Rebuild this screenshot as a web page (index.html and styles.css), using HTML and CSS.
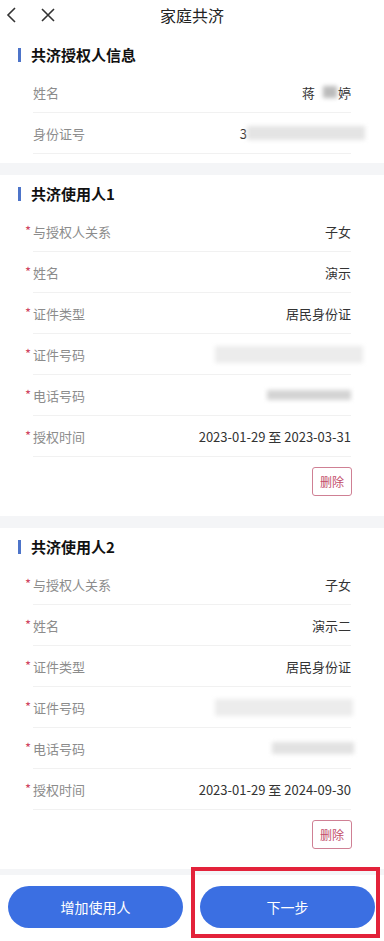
FILE: index.html
```html
<!DOCTYPE html>
<html lang="zh">
<head>
<meta charset="utf-8">
<title>家庭共济</title>
<link rel="stylesheet" href="styles.css">
</head>
<body>
<div class="page">
  <header class="nav">
    <div class="nav-icons">
      <svg class="ic" width="14" height="18" viewBox="0 0 14 18"><path d="M10 2 L3 9 L10 16" fill="none" stroke="#333" stroke-width="1.6"/></svg>
      <svg class="ic" width="18" height="18" viewBox="0 0 18 18"><path d="M3 3 L15 15 M15 3 L3 15" fill="none" stroke="#333" stroke-width="1.6"/></svg>
    </div>
    <div class="nav-title">家庭共济</div>
  </header>

  <section class="card card-info">
    <div class="card-title"><span class="bar"></span>共济授权人信息</div>
    <div class="row"><span class="label plain">姓名</span><span class="value">蒋<span class="blur blur-name"></span>婷</span></div>
    <div class="row"><span class="label plain">身份证号</span><span class="value">3<span class="blur blur-id"></span></span></div>
  </section>

  <div class="gap"></div>

  <section class="card">
    <div class="card-title"><span class="bar"></span>共济使用人1</div>
    <div class="row"><span class="label"><i class="req">*</i>与授权人关系</span><span class="value">子女</span></div>
    <div class="row"><span class="label"><i class="req">*</i>姓名</span><span class="value">演示</span></div>
    <div class="row"><span class="label"><i class="req">*</i>证件类型</span><span class="value">居民身份证</span></div>
    <div class="row"><span class="label"><i class="req">*</i>证件号码</span><span class="value"><span class="blur blur-cert"></span></span></div>
    <div class="row"><span class="label"><i class="req">*</i>电话号码</span><span class="value"><span class="blur blur-phone"></span></span></div>
    <div class="row"><span class="label"><i class="req">*</i>授权时间</span><span class="value">2023-01-29 至 2023-03-31</span></div>
    <div class="actions"><button class="del">删除</button></div>
  </section>

  <div class="gap"></div>

  <section class="card">
    <div class="card-title"><span class="bar"></span>共济使用人2</div>
    <div class="row"><span class="label"><i class="req">*</i>与授权人关系</span><span class="value">子女</span></div>
    <div class="row"><span class="label"><i class="req">*</i>姓名</span><span class="value">演示二</span></div>
    <div class="row"><span class="label"><i class="req">*</i>证件类型</span><span class="value">居民身份证</span></div>
    <div class="row"><span class="label"><i class="req">*</i>证件号码</span><span class="value"><span class="blur blur-cert2"></span></span></div>
    <div class="row"><span class="label"><i class="req">*</i>电话号码</span><span class="value"><span class="blur blur-phone2"></span></span></div>
    <div class="row"><span class="label"><i class="req">*</i>授权时间</span><span class="value">2023-01-29 至 2024-09-30</span></div>
    <div class="actions"><button class="del">删除</button></div>
  </section>

  <div class="gap small"></div>

  <footer class="bottom">
    <button class="btn">增加使用人</button>
    <button class="btn">下一步</button>
    <div class="highlight"></div>
  </footer>
</div>
</body>
</html>
```

FILE: styles.css
```css
* { box-sizing: border-box; }
html, body { margin: 0; padding: 0; background: #fff; }
body {
  font-family: "Noto Sans CJK SC", "Noto Sans", sans-serif;
  color: #333;
  width: 384px;
  overflow: hidden;
}
.page { position: relative; width: 384px; }

.nav {
  position: relative;
  height: 36px;
  display: flex;
  align-items: center;
  justify-content: center;
}
.nav-icons {
  position: absolute;
  left: 5px;
  top: 6px;
  display: flex;
  gap: 20px;
  align-items: center;
}
.nav-title {
  font-size: 16px;
  color: #222;
  margin-top: -6px;
}

.card { background: #fff; }
.card-info { padding-bottom: 9px; }
.card-title {
  height: 36px;
  padding: 8px 0 6px 18px;
  display: flex;
  align-items: center;
  font-size: 15px;
  font-weight: bold;
  color: #111;
  line-height: 22px;
}
.bar {
  display: inline-block;
  width: 3px;
  height: 14px;
  background: #4d74c9;
  margin-right: 10px;
}
.row {
  height: 41px;
  margin: 0 33px 0 33px;
  display: flex;
  align-items: center;
  justify-content: space-between;
  border-bottom: 1px solid #f1f1f1;
  font-size: 13px;
}
.label { color: #8c8c8c; position: relative; }
.req {
  position: absolute;
  left: -8px;
  top: -1px;
  font-style: normal;
  color: #d0455f;
  font-size: 13px;
}
.value { color: #333; display: flex; align-items: center; }

.blur {
  display: inline-block;
  background: #dcdcdc;
  filter: blur(2px);
  height: 14px;
}
.blur-name { width: 14px; height: 12px; margin: 0 1px 0 8px; background: #bbb; }
.blur-id { width: 118px; margin-right: -14px; background: #e4e4e4; }
.blur-cert { width: 148px; height: 17px; margin-right: -12px; background: #ececec; }
.blur-phone { width: 84px; height: 10px; background: #d4d4d4; }
.blur-cert2 { width: 138px; height: 17px; margin-right: -2px; background: #ececec; }
.blur-phone2 { width: 82px; height: 12px; margin-right: -3px; background: #e2e2e2; }

.actions {
  display: flex;
  justify-content: flex-end;
  padding: 10px 32px 20px 0;
}
.del {
  width: 40px;
  height: 29px;
  border: 1px solid #cf8094;
  border-radius: 3px;
  background: #fff;
  color: #c24d6a;
  font-family: inherit;
  font-size: 12px;
  padding: 0;
}

.gap { height: 12px; background: #f4f5f7; }
.gap.small { height: 6px; }

.bottom {
  position: relative;
  height: 63px;
  padding: 11px 9px 0 8px;
  display: flex;
  gap: 17px;
  align-items: flex-start;
}
.btn {
  flex: 1;
  height: 42px;
  border: none;
  border-radius: 21px;
  background: #3b6fe2;
  color: #fff;
  font-family: inherit;
  font-size: 14px;
}
.highlight {
  position: absolute;
  left: 191px;
  top: -8px;
  width: 189px;
  height: 71px;
  border: 4px solid #e3223a;
  pointer-events: none;
}
```
